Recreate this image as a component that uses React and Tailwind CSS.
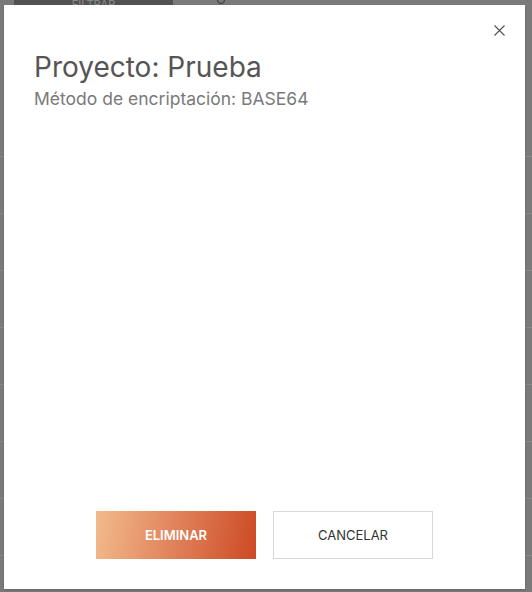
import React from "react";

const rows = Array.from({ length: 9 });

function CloseIcon() {
  return (
    <svg width="11" height="11" viewBox="0 0 11 11" fill="none" stroke="#555" strokeWidth="1.2">
      <path d="M0.5 0.5 L10.5 10.5 M10.5 0.5 L0.5 10.5" />
    </svg>
  );
}

export default function App() {
  return (
    <div className="relative h-[592px] w-[532px] overflow-hidden bg-[#7a7a7a] font-['Inter',sans-serif]">
      {/* page behind the dimmed overlay */}
      <div className="flex h-[14px] items-start">
        <div className="ml-[14px] flex h-[14px] w-[159px] items-start justify-center bg-[#525252] text-[11px] leading-[8px] text-[#8a8a8a]">
          FILTRAR
        </div>
        <div className="ml-[44px] mt-[-4px] h-[8px] w-[8px] rounded-full border border-[#333]" />
      </div>
      <div className="mt-[142px] flex flex-col">
        {rows.map((_, i) => (
          <div key={i} className="h-[57px] border-t border-[#888]" />
        ))}
      </div>

      {/* modal */}
      <div className="absolute left-[4px] top-[5px] flex h-[584px] w-[521px] flex-col bg-white shadow-[0_1px_2px_rgba(0,0,0,0.2)]">
        <div className="flex justify-end pr-[20px] pt-[20px]">
          <CloseIcon />
        </div>
        <div className="px-[30px] pt-[14px]">
          <h1 className="text-[28px] leading-[34px] font-normal text-[#555]">Proyecto: Prueba</h1>
          <p className="mt-[4px] text-[17.5px] leading-[22px] text-[#7a7a7a]">Método de encriptación: BASE64</p>
        </div>
        <div className="flex-1" />
        <div className="flex justify-center gap-[17px] pb-[30px]">
          <button className="h-[48px] w-[160px] pt-[2px] bg-[linear-gradient(100deg,#f2bb8c_0%,#e2875f_45%,#cc4a24_100%)] text-[13px] font-semibold text-white">
            ELIMINAR
          </button>
          <button className="h-[48px] w-[160px] pt-[2px] border border-[#d9d9d9] bg-white text-[13px] text-[#333]">
            CANCELAR
          </button>
        </div>
      </div>
    </div>
  );
}
